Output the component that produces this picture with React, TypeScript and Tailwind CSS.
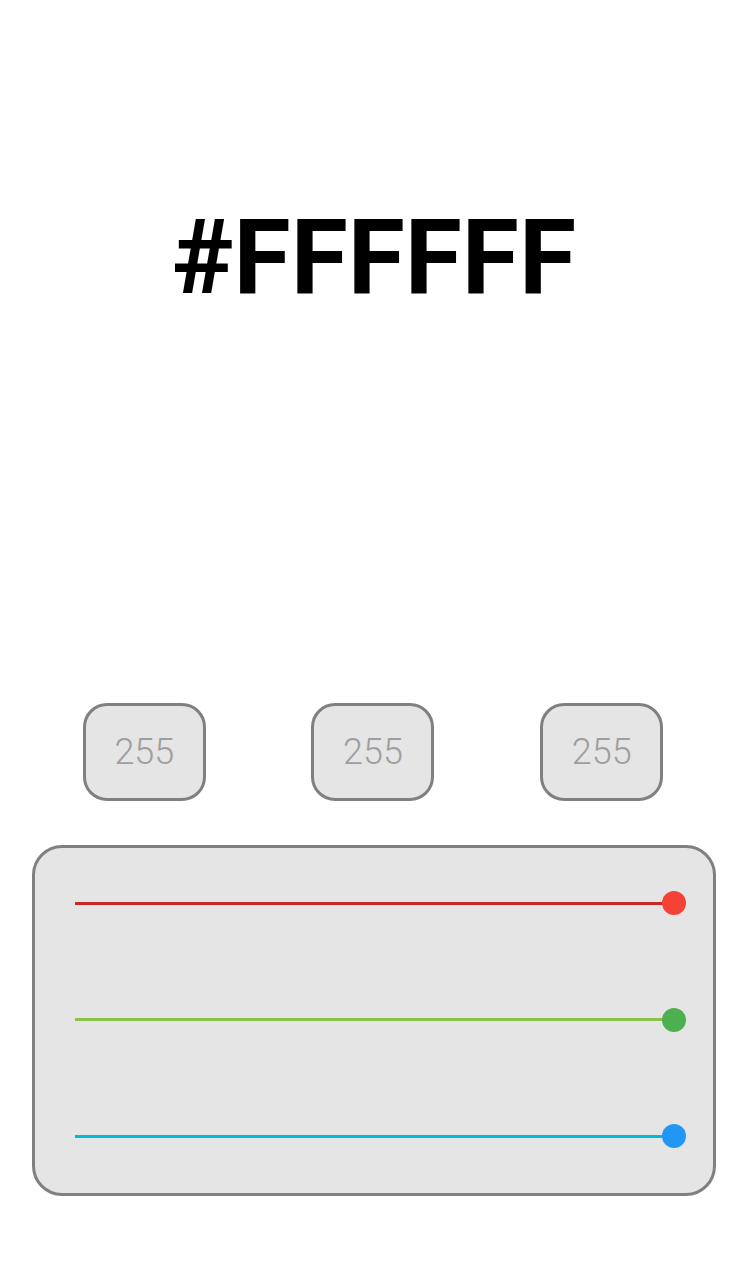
const channels = [
  { track: "bg-[#c62828]", thumb: "bg-[#f44336]" },
  { track: "bg-[#8bc34a]", thumb: "bg-[#4caf50]" },
  { track: "bg-[#00bcd4]", thumb: "bg-[#2196f3]" },
]

const App = () => {
  return (
    <div className="w-[748px] h-[1280px] bg-white flex flex-col font-['Roboto',sans-serif]">
      {/* HEX */}
      <div className="h-[516px] flex items-center justify-center">
        <h1 className="text-[104px] leading-none font-bold text-black">#FFFFFF</h1>
      </div>

      {/* VALUES */}
      <div className="grid grid-cols-3 pl-[30px] pr-[32px] mt-[187px]">
        {[255, 255, 255].map((v, i) => (
          <div key={i} className="flex justify-center">
            <div className="w-[123px] h-[98px] border-[3px] border-[#808080] rounded-[24px] bg-[#e5e5e5] flex items-center justify-center text-[36px] font-light text-[#9e9e9e]">
              {v}
            </div>
          </div>
        ))}
      </div>

      {/* SLIDERS */}
      <div className="mx-[32px] mt-[44px] h-[351px] border-[3px] border-[#808080] rounded-[30px] bg-[#e5e5e5] pl-[40px] pr-[27px] pt-[43px] flex flex-col gap-[92.5px]">
        {channels.map((c, i) => (
          <div key={i} className="flex items-center h-6">
            <div className={`flex-1 h-[3px] ${c.track}`} />
            <div className={`w-6 h-6 rounded-full -ml-3 ${c.thumb}`} />
          </div>
        ))}
      </div>
    </div>
  )
}

export default App
